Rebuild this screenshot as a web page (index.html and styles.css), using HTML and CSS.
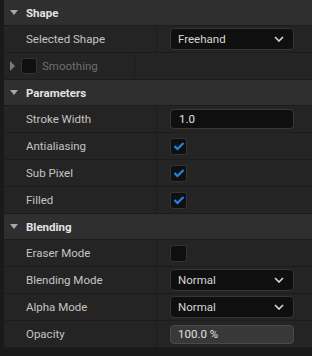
FILE: index.html
```html
<!DOCTYPE html>
<html lang="en">
<head>
  <meta charset="UTF-8">
  <title>Details</title>
  <link rel="stylesheet" href="styles.css">
</head>
<body>
  <div class="panel">

    <div class="header"><span class="arrow-down"></span>Shape</div>
    <div class="row">
      <div class="name">Selected Shape</div>
      <div class="value">
        <div class="combo">Freehand
          <svg class="chev" width="10" height="6" viewBox="0 0 10 6"><path d="M1 1 L5 5 L9 1" fill="none" stroke="#d8d8d8" stroke-width="1.6"/></svg>
        </div>
      </div>
      <div class="reset"></div>
    </div>
    <div class="row">
      <div class="name disabled"><span class="arrow-right"></span><span class="check small"></span>Smoothing</div>
      <div class="value"></div>
      <div class="reset"></div>
    </div>

    <div class="header"><span class="arrow-down"></span>Parameters</div>
    <div class="row">
      <div class="name">Stroke Width</div>
      <div class="value"><div class="field">1.0</div></div>
      <div class="reset"></div>
    </div>
    <div class="row">
      <div class="name">Antialiasing</div>
      <div class="value"><span class="check on"><svg width="12" height="10" viewBox="0 0 12 10"><path d="M1.5 5 L4.5 8 L10.5 2" fill="none" stroke="#1f86e6" stroke-width="2.2"/></svg></span></div>
      <div class="reset"></div>
    </div>
    <div class="row">
      <div class="name">Sub Pixel</div>
      <div class="value"><span class="check on"><svg width="12" height="10" viewBox="0 0 12 10"><path d="M1.5 5 L4.5 8 L10.5 2" fill="none" stroke="#1f86e6" stroke-width="2.2"/></svg></span></div>
      <div class="reset"></div>
    </div>
    <div class="row">
      <div class="name">Filled</div>
      <div class="value"><span class="check on"><svg width="12" height="10" viewBox="0 0 12 10"><path d="M1.5 5 L4.5 8 L10.5 2" fill="none" stroke="#1f86e6" stroke-width="2.2"/></svg></span></div>
      <div class="reset"></div>
    </div>

    <div class="header"><span class="arrow-down"></span>Blending</div>
    <div class="row">
      <div class="name">Eraser Mode</div>
      <div class="value"><span class="check"></span></div>
      <div class="reset"></div>
    </div>
    <div class="row">
      <div class="name">Blending Mode</div>
      <div class="value">
        <div class="combo">Normal
          <svg class="chev" width="10" height="6" viewBox="0 0 10 6"><path d="M1 1 L5 5 L9 1" fill="none" stroke="#d8d8d8" stroke-width="1.6"/></svg>
        </div>
      </div>
      <div class="reset"></div>
    </div>
    <div class="row">
      <div class="name">Alpha Mode</div>
      <div class="value">
        <div class="combo">Normal
          <svg class="chev" width="10" height="6" viewBox="0 0 10 6"><path d="M1 1 L5 5 L9 1" fill="none" stroke="#d8d8d8" stroke-width="1.6"/></svg>
        </div>
      </div>
      <div class="reset"></div>
    </div>
    <div class="row">
      <div class="name">Opacity</div>
      <div class="value"><div class="field slider">100.0 %</div></div>
      <div class="reset"></div>
    </div>

  </div>
</body>
</html>
```

FILE: styles.css
```css
body { margin: 0; background: #1a1a1a; font-family: Roboto, "Liberation Sans", sans-serif; font-size: 11.5px; }
.panel { margin-left: 4px; width: 308px; }

.header { display: flex; align-items: center; height: 25px; border-bottom: 1px solid #1c1c1c; background: #2f2f2f; color: #e2e2e2; font-weight: bold; }
.arrow-down { width: 0; height: 0; margin: 0 8px 0 6px; border-left: 4px solid transparent; border-right: 4px solid transparent; border-top: 5px solid #a8a8a8; }
.arrow-right { width: 0; height: 0; margin: 0 6px 0 6px; border-top: 5px solid transparent; border-bottom: 5px solid transparent; border-left: 5px solid #7a7a7a; }

.row { display: flex; height: 26px; border-bottom: 1px solid #1c1c1c; background: #242424; }
.name { display: flex; align-items: center; width: 130px; padding-left: 22px; border-right: 1px solid #1c1c1c; color: #c4c4c4; }
.name.disabled { padding-left: 0; color: #6e6e6e; }
.value { display: flex; align-items: center; flex: 1; padding-left: 13px; }
.reset { width: 12px; }

.combo { display: flex; align-items: center; justify-content: space-between; box-sizing: border-box; width: 124px; height: 22px; padding: 0 9px 0 7px; border: 1px solid #363636; border-radius: 4px; background: #0f0f0f; color: #d6d6d6; }
.field { display: flex; align-items: center; box-sizing: border-box; width: 124px; height: 20px; padding-left: 8px; border: 1px solid #383838; border-radius: 4px; background: #0f0f0f; color: #e0e0e0; }
.field.slider { height: 19px; padding-left: 7px; border-color: #4a4a4a; background: #383838; }

.check { display: inline-flex; align-items: center; justify-content: center; box-sizing: border-box; width: 17px; height: 17px; border: 1px solid #333333; border-radius: 3px; background: #0f0f0f; }
.check.small { width: 16px; height: 16px; margin-right: 5px; }
```
